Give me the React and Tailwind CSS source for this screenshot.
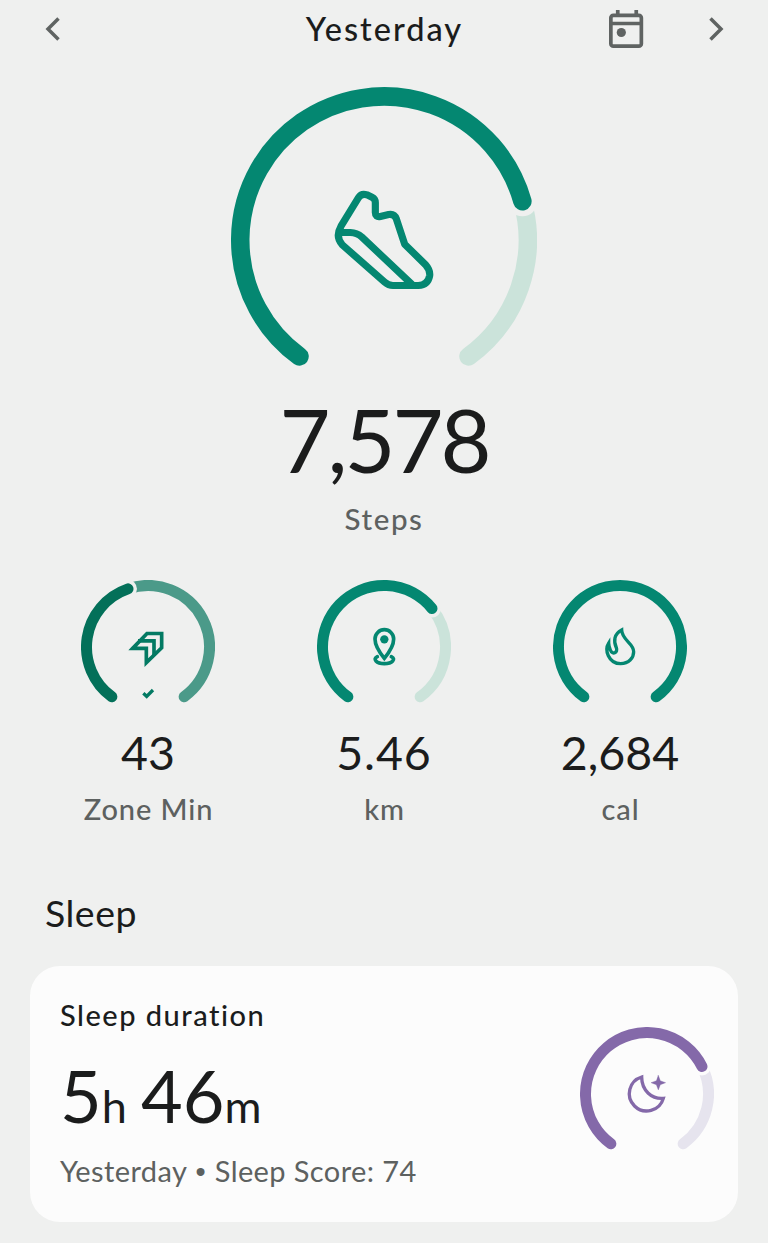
const SWEEP = 288
const START = -144

// bearing in degrees, 0 = straight up, clockwise
function pointAt(r, bearing) {
  const rad = (bearing * Math.PI) / 180
  return [r * Math.sin(rad), -r * Math.cos(rad)]
}

function arcPath(r, from, to) {
  const [x1, y1] = pointAt(r, from)
  const [x2, y2] = pointAt(r, to)
  return `M${x1} ${y1}A${r} ${r} 0 ${to - from > 180 ? 1 : 0} 1 ${x2} ${y2}`
}

function Gauge({ radius, stroke, gap, value, color, track, bg, className, children }) {
  const r = radius - stroke / 2
  const end = START + SWEEP * value
  const [tipX, tipY] = pointAt(r, end)

  return (
    <svg
      className={className}
      viewBox={`${-radius} ${-radius} ${radius * 2} ${radius * 1.88}`}
      fill="none"
      strokeLinecap="round"
    >
      {value < 1 && (
        <>
          <path d={arcPath(r, end, START + SWEEP)} stroke={track} strokeWidth={stroke} />
          <circle cx={tipX} cy={tipY} r={gap} fill={bg} />
        </>
      )}
      <path d={arcPath(r, START, end)} stroke={color} strokeWidth={stroke} />
      {children}
    </svg>
  )
}

function ShoeIcon() {
  return (
    <g transform="scale(.3333) translate(-193 -180)" stroke="#048771" strokeWidth="21.5" strokeLinejoin="round">
      <path d="M116 53Q125 38 142 44L157 51Q167 56 167 67V97Q167 112 182 109L207 103Q224 100 230 116L255 192L318 254Q332 270 330 286Q325 314 296 316H220Q206 316 195 306L68 194Q46 170 64 138Z" />
      <path d="M60 157H92Q112 158 126 170L276 312" />
    </g>
  )
}

function ZoneIcon() {
  return (
    <g transform="scale(.3333) translate(-235 -231)" stroke="#037a63" strokeWidth="11" strokeLinecap="butt">
      <path d="M189 235L232 190.500H276V233L230 278V235Z" />
      <path d="M205 212.500H253V258" />
      <path d="M221 370L231 379L250 360" strokeWidth="10" />
    </g>
  )
}

function PinIcon() {
  return (
    <g transform="scale(.3333) translate(-237 -231)" stroke="#048771" strokeWidth="11">
      <path d="M238 265Q210 231 210 207A28 28 0 0 1 266 207Q266 231 238 265Z" />
      <circle cx="238" cy="208" r="12.5" fill="#048771" stroke="none" />
      <path d="M217 260C202 267 214 281 238 281C262 281 274 267 259 260" />
    </g>
  )
}

function FlameIcon() {
  return (
    <g transform="scale(.3333) translate(-240 -231)" stroke="#048771" strokeWidth="10" strokeLinejoin="miter">
      <path d="M245 180C222 192 220 214 229 233C235 248 217 256 211 240C208 232 206 226 206 219C199 230 200 246 205 257C213 274 228 281 242 281C266 281 281 264 281 245C281 219 246 211 245 180Z" />
    </g>
  )
}

function MoonIcon() {
  return (
    <g transform="scale(.3333) translate(-230 -238)" stroke="#8469a9" strokeWidth="10" strokeLinejoin="miter">
      <path d="M214 187A52 52 0 1 0 279 251C245 254 214 228 214 187Z" />
      <path d="M264 182L270 198L286 204L270 210L264 226L258 210L242 204L258 198Z" fill="#8469a9" strokeWidth="1" />
    </g>
  )
}

function Chevron({ d }) {
  return (
    <svg className="h-6 w-4" viewBox="0 0 16 24" fill="none" stroke="#5f6362" strokeWidth="3.5">
      <path d={d} />
    </svg>
  )
}

function CalendarIcon() {
  return (
    <svg className="h-10 w-9" viewBox="0 0 36 40" fill="none" stroke="#5f6362" strokeWidth="3.7">
      <rect x="2.85" y="6.35" width="30.5" height="30.8" rx="2.5" />
      <path d="M2.75 14.5h31M9.75 1v5M28.25 1v5" />
      <circle cx="13.3" cy="23.5" r="4.6" fill="#5f6362" stroke="none" />
    </svg>
  )
}

const stats = [
  {
    label: 'Zone Min',
    value: '43',
    progress: 0.434,
    color: '#037059',
    track: '#4b9a89',
    icon: <ZoneIcon />,
    valueClass: 'tracking-[0px]',
  },
  {
    label: 'km',
    value: '5.46',
    progress: 0.678,
    color: '#048771',
    track: '#cbe3da',
    icon: <PinIcon />,
    valueClass: 'tracking-[0.9px]',
  },
  {
    label: 'cal',
    value: '2,684',
    progress: 1,
    color: '#048771',
    track: '#cbe3da',
    icon: <FlameIcon />,
    valueClass: 'tracking-[0px]',
  },
]

export default function App() {
  return (
    <div className="h-[1243px] w-[768px] overflow-hidden bg-[#eff0ef] font-['Lato','Liberation_Sans',sans-serif] text-[#1b1c1c]">
      <header className="grid h-[58px] grid-cols-[1fr_auto_1fr] items-center pr-11 pl-[45px]">
        <button type="button" aria-label="Previous day" className="justify-self-start">
          <Chevron d="M13.5 1.5L3 12L13.5 22.5" />
        </button>
        <h1 className="pb-px text-[32.5px] leading-8 font-medium tracking-[2px]">Yesterday</h1>
        <div className="flex items-center gap-[64px] justify-self-end">
          <button type="button" aria-label="Pick a date">
            <CalendarIcon />
          </button>
          <button type="button" aria-label="Next day">
            <Chevron d="M2.5 1.5L13 12L2.5 22.5" />
          </button>
        </div>
      </header>

      <section className="flex flex-col items-center pt-[29px]">
        <Gauge
          className="h-[288px] w-[306px]"
          radius={153}
          stroke={18.5}
          gap={15}
          value={0.758}
          color="#048771"
          track="#cbe3da"
          bg="#eff0ef"
        >
          <ShoeIcon />
        </Gauge>
        <p className="mt-5 text-[88px] leading-[88px] tracking-[-3px]">7,578</p>
        <p className="mt-5 text-[29.5px] leading-8 font-medium tracking-[1.6px] text-[#5d6160]">Steps</p>
      </section>

      <section className="grid grid-cols-3 px-[30px] pt-[45px]">
        {stats.map((s) => (
          <div key={s.label} className="flex flex-col items-center">
            <Gauge
              className="h-[126px] w-[134px]"
              radius={67}
              stroke={11}
              gap={9}
              value={s.progress}
              color={s.color}
              track={s.track}
              bg="#eff0ef"
            >
              {s.icon}
            </Gauge>
            <p className={`mt-[23px] text-[46.5px] leading-[46px] ${s.valueClass}`}>{s.value}</p>
            <p className="mt-[18px] pl-px text-[29px] leading-8 font-medium tracking-[0.9px] text-[#5d6160]">{s.label}</p>
          </div>
        ))}
      </section>

      <h2 className="mt-[68px] pl-[45px] text-[37.5px] leading-10 tracking-[0.5px]">Sleep</h2>

      <section className="mx-[30px] mt-[33px] flex h-[256px] justify-between rounded-[30px] bg-[#fcfcfc] pr-6 pl-[30px]">
        <div>
          <h3 className="mt-[33px] text-[29px] leading-8 font-medium tracking-[1.5px]">Sleep duration</h3>
          <p className="mt-[29px] flex h-[70px] items-baseline text-[72px] leading-[70px]">
            5<span className="text-[45px]">h</span>
            <span className="ml-3.5">46</span>
            <span className="text-[45px]">m</span>
          </p>
          <p className="mt-[25px] text-[29px] leading-8 tracking-[0.4px] text-[#5d6160]">
            Yesterday <span className="mx-px font-['Liberation_Sans']">•</span> Sleep Score: 74
          </p>
        </div>
        <Gauge
          className="mt-[61px] h-[126px] w-[134px]"
          radius={67}
          stroke={11}
          gap={9}
          value={0.72}
          color="#8469a9"
          track="#e6e4ee"
          bg="#fcfcfc"
        >
          <MoonIcon />
        </Gauge>
      </section>
    </div>
  )
}
